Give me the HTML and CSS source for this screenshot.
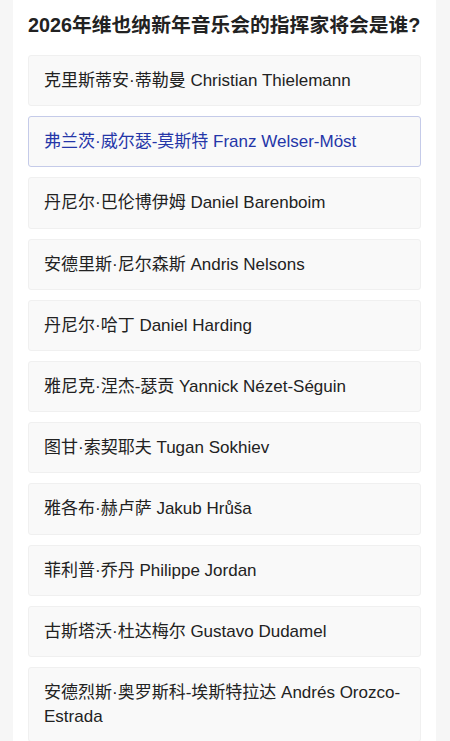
FILE: index.html
```html
<!DOCTYPE html>
<html lang="zh-CN">
<head>
    <meta charset="UTF-8">
    <meta name="viewport" content="width=device-width, initial-scale=1.0">
    <title>2026年维也纳新年音乐会</title>
    <link rel="stylesheet" href="styles.css">
</head>
<body>
    <div class="quiz">
        <h2 class="question">2026年维也纳新年音乐会的指挥家将会是谁?</h2>
        <div class="options">
            <div class="option">克里斯蒂安·蒂勒曼 Christian Thielemann</div>
            <div class="option selected">弗兰茨·威尔瑟-莫斯特 Franz Welser-Möst</div>
            <div class="option">丹尼尔·巴伦博伊姆 Daniel Barenboim</div>
            <div class="option">安德里斯·尼尔森斯 Andris Nelsons</div>
            <div class="option">丹尼尔·哈丁 Daniel Harding</div>
            <div class="option">雅尼克·涅杰-瑟贡 Yannick Nézet-Séguin</div>
            <div class="option">图甘·索契耶夫 Tugan Sokhiev</div>
            <div class="option">雅各布·赫卢萨 Jakub Hrůša</div>
            <div class="option">菲利普·乔丹 Philippe Jordan</div>
            <div class="option">古斯塔沃·杜达梅尔 Gustavo Dudamel</div>
            <div class="option">安德烈斯·奥罗斯科-埃斯特拉达 Andrés Orozco-Estrada</div>
        </div>
    </div>
</body>
</html>
```

FILE: styles.css
```css
* {
    margin: 0;
    padding: 0;
    box-sizing: border-box;
}
body {
    background-color: #f6f6f6;
    font-family: "Liberation Sans", "Noto Sans CJK SC", sans-serif;
    color: #222;
}
.quiz {
    margin: 0 14px 0 13px;
    padding: 13px 15px 20px 15px;
    background-color: #fff;
    min-height: 100vh;
}
.question {
    font-size: 19.8px;
    line-height: 24px;
    font-weight: bold;
    white-space: nowrap;
    margin-bottom: 18px;
}
.options {
    display: flex;
    flex-direction: column;
    gap: 10px;
}
.option {
    padding: 13px 15px 12.2px 15px;
    font-size: 17px;
    line-height: 24px;
    background-color: #f9f9f9;
    border: 1px solid #f0f0f0;
    border-radius: 3px;
    cursor: pointer;
}
.option.selected {
    border-color: #c5cbe9;
    color: #2536a8;
}
```
